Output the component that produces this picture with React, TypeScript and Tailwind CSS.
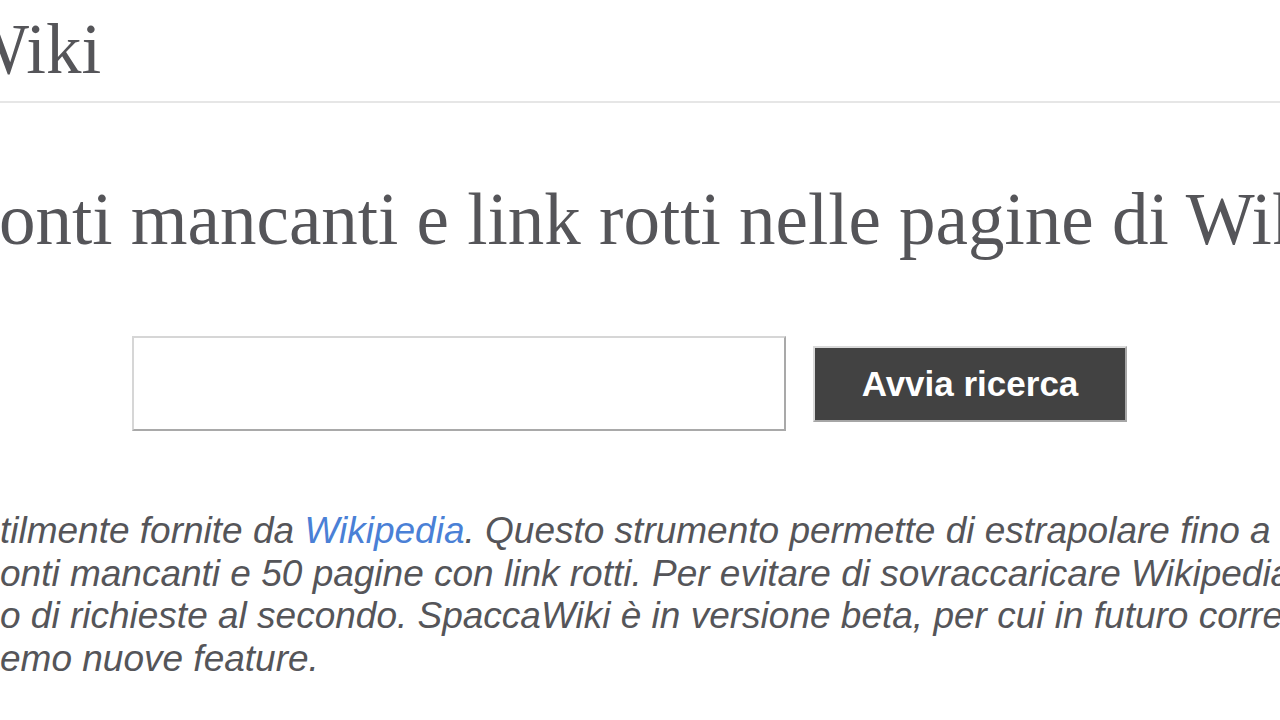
import React from "react";

export default function App() {
  const serif = { fontFamily: '"Liberation Serif", "DejaVu Serif", serif' };
  const sans = { fontFamily: '"Liberation Sans", Arial, sans-serif' };
  return (
    <div className="w-[1280px] h-[720px] overflow-hidden bg-white text-[#555559]">
      <header className="h-[103px] border-b-2 border-[#e6e6e6] flex items-end overflow-hidden">
        <div
          className="whitespace-nowrap text-[71px] leading-none ml-[-38px] pb-[16px]"
          style={serif}
        >
          Wiki
        </div>
      </header>

      <h1
        className="whitespace-nowrap text-[73px] leading-none mt-[80px] ml-[-1px]"
        style={serif}
      >
        onti mancanti e link rotti nelle pagine di Wikipedia
      </h1>

      <div className="flex items-center mt-[80px] pl-[132px]">
        <input
          type="text"
          className="w-[654px] h-[95px] bg-white border-2 border-t-[#d6d6d6] border-l-[#d6d6d6] border-r-[#a9a9a9] border-b-[#a9a9a9] outline-none"
        />
        <button
          className="ml-[27px] w-[314px] h-[76px] bg-[#424242] text-white font-bold text-[35px] leading-none border-2 border-t-[#d9d9d9] border-l-[#d9d9d9] border-r-[#a6a6a6] border-b-[#a6a6a6]"
          style={sans}
        >
          Avvia ricerca
        </button>
      </div>

      <div
        className="mt-[79px] italic text-[37px] leading-[42.5px] whitespace-nowrap"
        style={sans}
      >
        <div>
          tilmente fornite da{" "}
          <a className="text-[#4a80d6]">Wikipedia</a>. Questo strumento permette di estrapolare fino a 50
        </div>
        <div>onti mancanti e 50 pagine con link rotti. Per evitare di sovraccaricare Wikipedia, abbiamo</div>
        <div>o di richieste al secondo. SpaccaWiki è in versione beta, per cui in futuro correggeremo</div>
        <div>emo nuove feature.</div>
      </div>
    </div>
  );
}
